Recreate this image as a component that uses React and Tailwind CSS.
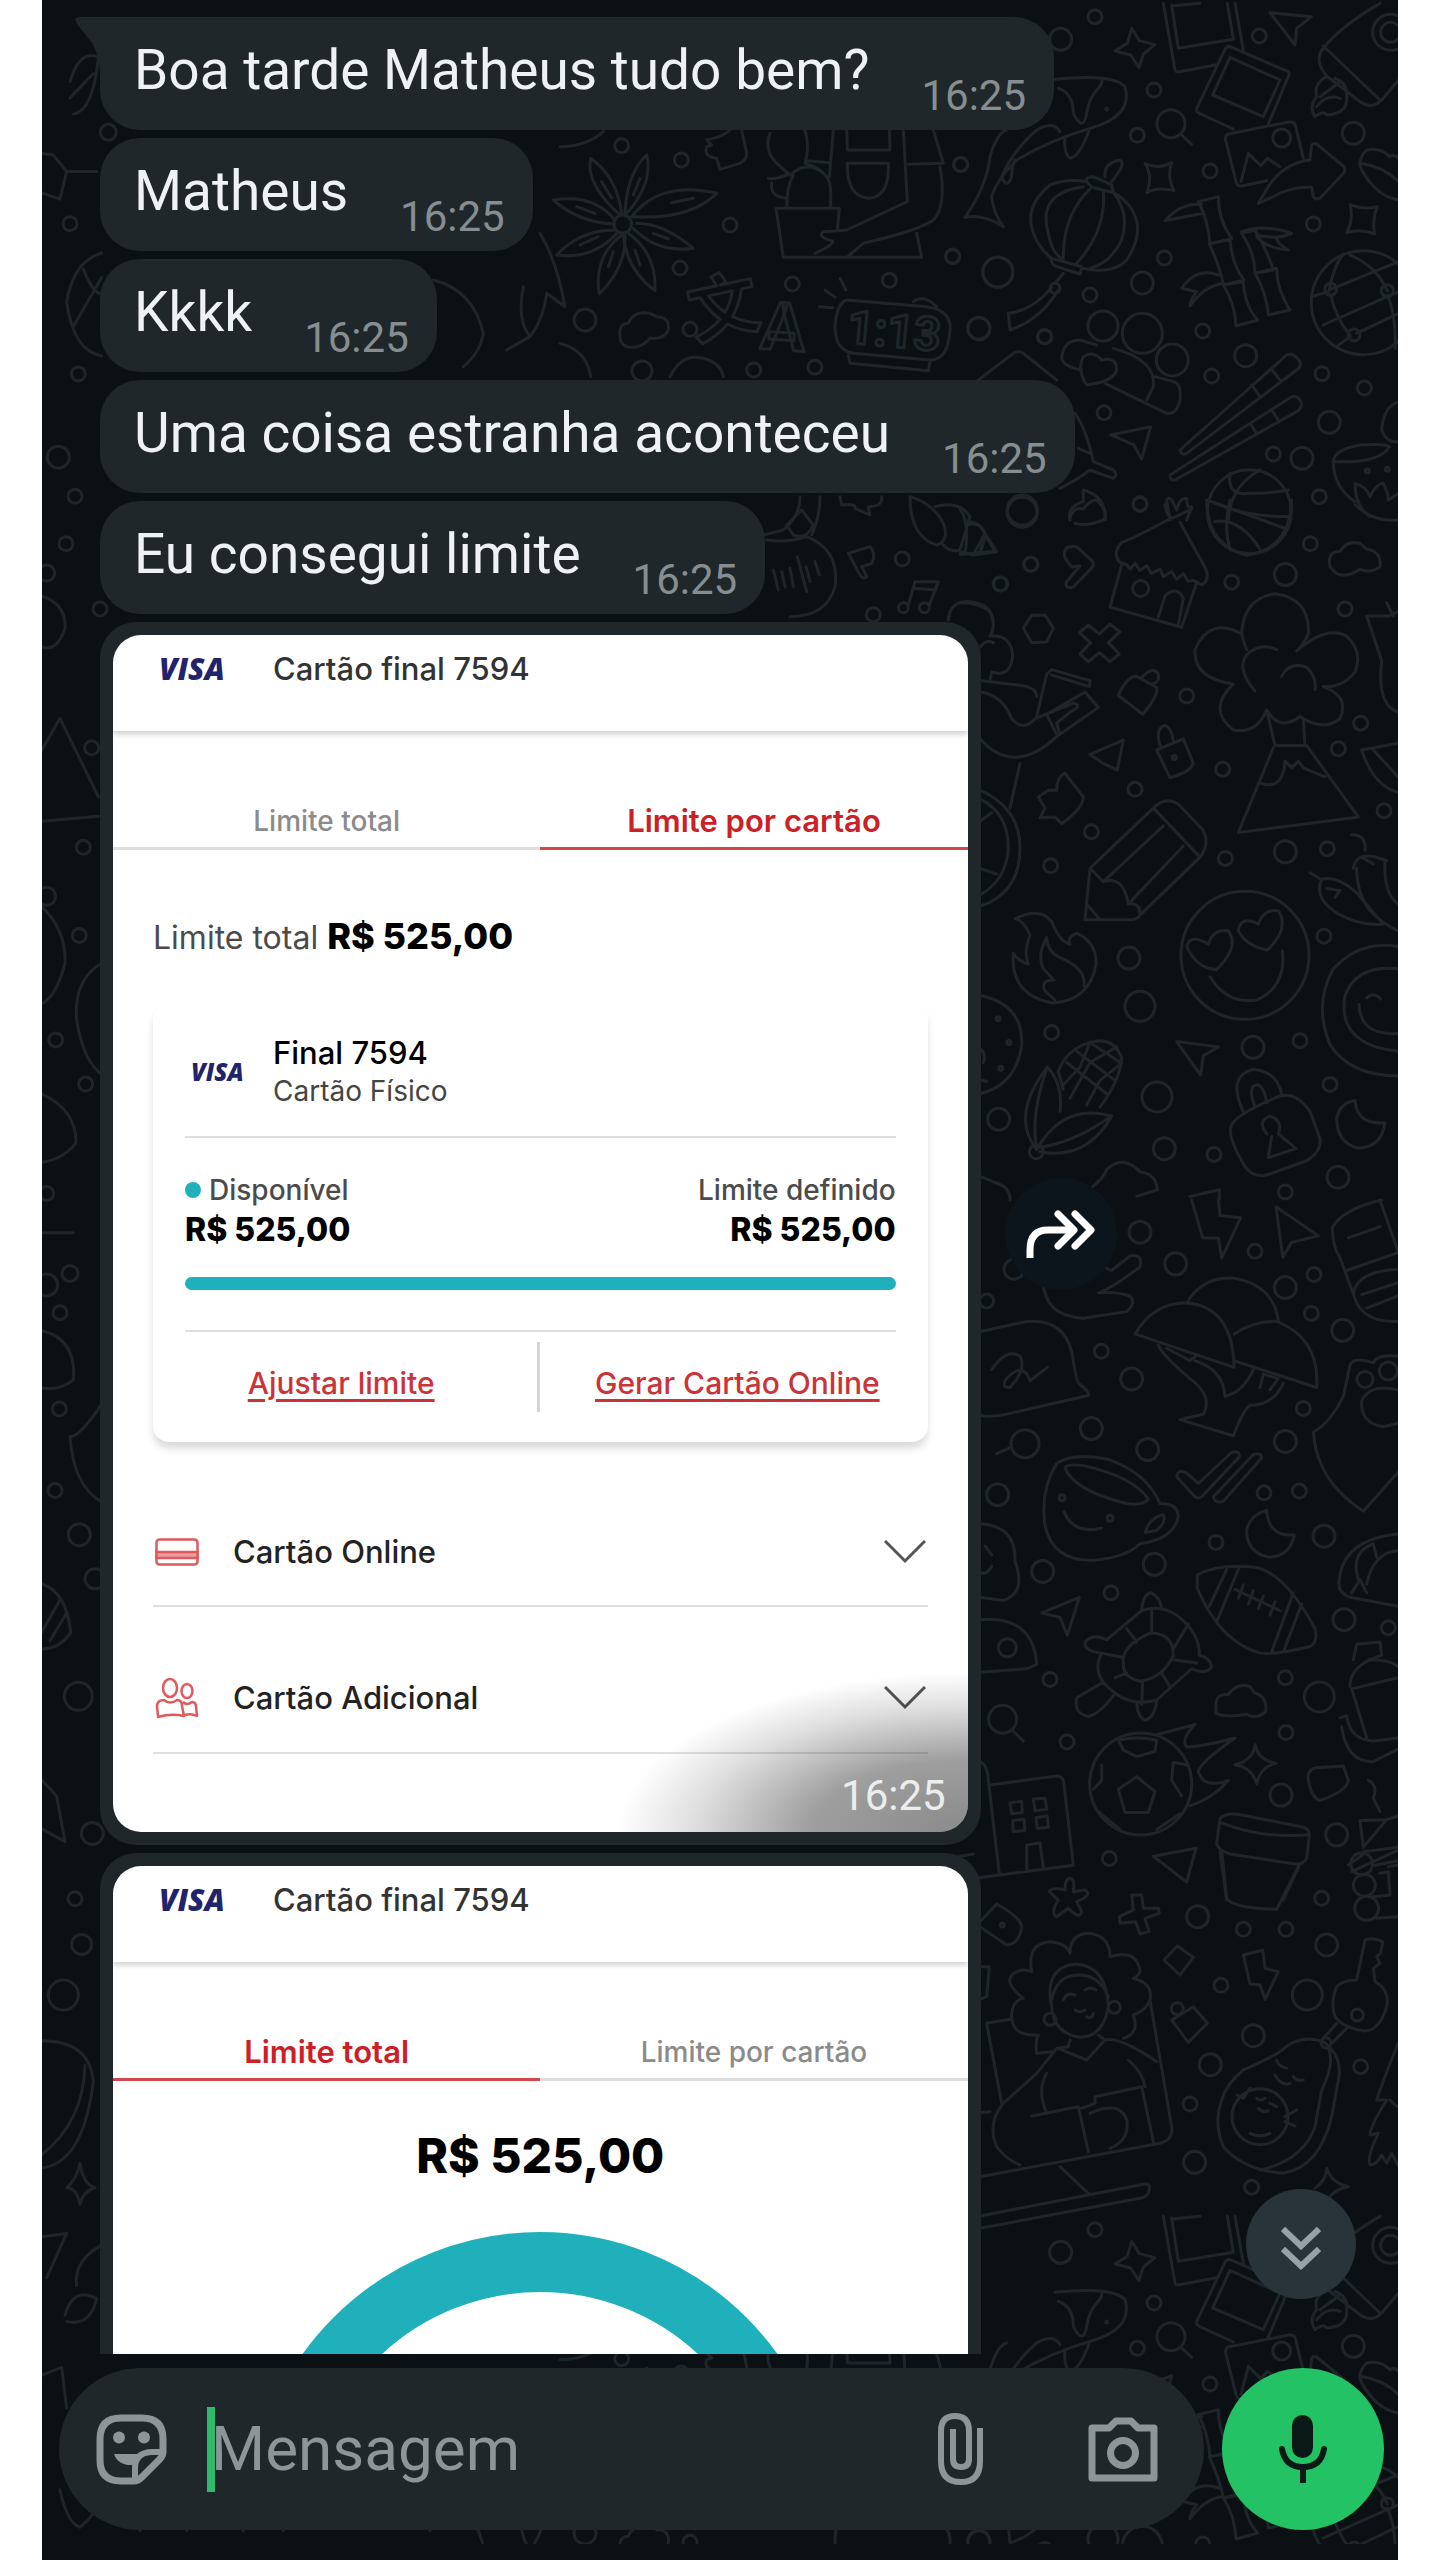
import { useState } from "react";
import clsx from "clsx";

const MESSAGES = [
  { id: 1, text: "Boa tarde Matheus tudo bem?", time: "16:25", tail: true },
  { id: 2, text: "Matheus", time: "16:25" },
  { id: 3, text: "Kkkk", time: "16:25" },
  { id: 4, text: "Uma coisa estranha aconteceu", time: "16:25" },
  { id: 5, text: "Eu consegui limite", time: "16:25" },
];

const TABS = ["Limite total", "Limite por cartão"];

// Wallpaper doodles. Each tile has its own origin and scale; a dot is [x, y, radius].
const TILES = [
  {
    id: "top-right",
    origin: "translate(940 0) scale(0.33333)",
    sx: 1 / 3,
    sy: 1 / 3,
    repeat: true,
    dots: [
      [465, 50, 7], [362, 118, 11], [642, 270, 7], [592, 406, 7], [958, 108, 7], [810, 513, 7], [1240, 400, 11],
      [1120, 672, 7], [62, 494, 7], [38, 770, 7], [173, 817, 15], [117, 986, 11], [315, 1010, 7], [450, 885, 7],
      [607, 849, 11], [673, 774, 7], [788, 993, 7], [917, 1067, 11], [815, 1128, 7], [1146, 1121, 7], [1273, 1164, 7],
      [1168, 1267, 11], [492, 1238, 7], [1000, 1362, 7], [1086, 1375, 11], [1138, 1490, 7], [600, 1511, 7], [247, 1530, 15],
      [489, 978, 15], [607, 1000, 20], [697, 1080, 16], [1025, 414, 9], [693, 371, 14], [1352, 97, 18], [1352, 97, 10],
      [1172, 868, 6], [1342, 872, 6], [1242, 1005, 6], [345, 865, 5], [500, 327, 1], [1282, 1413, 2], [1342, 1408, 2],
      [1270, 908, 52], [928, 1535, 42],
    ],
    paths: [
      "M575 85L598 122L645 134L610 162L597 203L572 165L525 153L562 130Z",
      "M670 10L705 210Q708 217 718 215L830 194M695 15L715 145L880 118L862 10M885 10L910 150M695 18L780 10",
      "M870 140L1045 215Q1050 222 1045 230L985 372M870 140Q860 138 855 148L770 325Q768 335 778 340L880 387M870 172L1020 240L970 350L818 285Z",
      "M865 402L1050 365Q1065 365 1067 380L1090 475M865 402Q855 405 857 420L888 545Q892 560 905 558L980 542M903 545L925 460L962 497L982 475L1020 500",
      "M955 610L985 560Q1030 490 1110 480L1115 435Q1120 428 1130 432L1212 500Q1216 510 1212 518L1140 595Q1125 600 1120 590L1115 562Q1050 560 1000 590Z",
      "M725 405L755 433",
      "M990 38L1115 50L1070 85L1065 135Z",
      "M1320 10Q1200 80 1150 145Q1120 180 1160 228L1260 305Q1295 330 1325 300L1376 240M1150 138L1320 300M1160 230Q1120 250 1130 290Q1105 320 1125 350Q1150 330 1160 345Q1225 340 1220 290Q1225 250 1185 235M1140 290L1195 250M1130 320Q1160 280 1200 295",
      "M615 490Q655 510 695 488Q680 530 702 572Q655 560 620 578Q640 530 615 490ZM1230 614Q1270 630 1312 620Q1295 660 1304 702Q1260 685 1220 698Q1242 655 1230 614Z",
      "M345 238Q520 220 555 260Q580 350 450 385Q330 420 230 480Q170 540 155 590Q160 640 190 680Q130 640 75 652Q140 560 150 470Q170 400 200 390M355 265Q400 280 400 340Q430 400 440 340Q445 300 470 270Q490 250 485 235M360 395Q340 360 290 390Q220 450 185 530Q200 570 215 530Q215 500 225 480M375 410Q370 460 390 475Q420 470 450 385",
      "M440 545Q380 535 330 555Q250 620 280 700Q300 750 335 775Q330 790 350 800L420 822L425 805Q520 825 560 780Q620 690 570 620Q545 590 520 578M440 545Q435 530 460 530L515 555L520 578L455 562ZM335 775L425 800M455 562Q370 640 370 770M490 572Q500 690 410 790M430 560Q290 580 325 700Q335 760 370 780M520 578Q570 640 545 720Q510 790 450 805M495 530Q490 490 540 480Q560 490 515 545M370 820L345 850M355 870Q300 960 210 990L205 940Q280 930 335 862",
      "M775 605L835 590Q835 660 875 715L810 732Q805 660 775 605M785 612Q720 610 675 662L790 640M808 732L870 718Q875 790 912 840L850 855Q840 800 808 732M850 855L910 845Q915 920 953 960L888 978Q885 910 850 855M905 700L945 690Q985 760 1000 810L945 820Q945 760 905 700M905 695Q970 670 1055 700Q1010 720 950 705M950 710Q980 745 1045 750Q1010 730 1010 715M945 820L1010 805Q1010 870 1050 930L985 945Q980 880 945 820M850 850Q790 860 750 918Q750 900 770 875L725 865Q770 800 835 825",
      "M1168 868Q1180 800 1210 762M1172 868L1376 785M1172 885Q1190 960 1230 1005M1150 975L1376 875M1250 1000L1376 940M1342 872Q1310 800 1230 765M1342 885Q1370 950 1365 1045M1115 890L1165 875M1190 1040L1230 1010",
      "M115 1140L220 1060Q235 1050 250 1060L350 1140M405 1240Q440 1290 460 1385L520 1410Q535 1425 520 1435L450 1410Q410 1440 360 1465M415 1345L450 1360",
      "M365 1075Q370 1020 420 1020L470 1035M365 1075Q370 1100 425 1110M440 1155Q410 1110 430 1070Q460 1050 485 1080Q530 1070 530 1110Q520 1145 440 1155ZM520 1045Q650 1080 640 1160L620 1200M495 1150L680 1240Q710 1245 720 1200Q725 1150 700 1145L645 1130",
      "M720 1350L1040 1065Q1060 1055 1080 1085Q1085 1100 1070 1110L740 1360Q725 1368 720 1350ZM935 1155L960 1190M995 1108L1020 1140M690 1425L1055 1190Q1075 1185 1085 1210Q1085 1225 1070 1235L705 1440Q690 1442 690 1425ZM930 1270L950 1300M995 1230L1015 1260",
      "M512 1305L632 1280L605 1378L582 1335Z",
      "M1180 1385Q1180 1350 1260 1335Q1340 1330 1348 1340Q1320 1390 1180 1385M1180 1385Q1180 1460 1245 1505M1376 1205Q1330 1220 1325 1290Q1340 1330 1376 1325M1245 1450Q1280 1460 1290 1490Q1310 1450 1330 1450Q1345 1480 1345 1500L1376 1480M1245 1450Q1245 1520 1290 1550",
      "M1376 475Q1360 460 1350 470Q1320 440 1280 450Q1250 480 1265 510Q1310 590 1376 600M1262 490Q1330 500 1376 545",
      "M805 1500Q900 1550 1045 1550M870 1420Q860 1490 930 1480Q1000 1480 1045 1470M960 1410Q870 1460 865 1560M680 1500Q690 1480 710 1530Q720 1490 740 1495Q740 1530 755 1520L740 1560M680 1500L690 1560M390 1560Q380 1520 430 1505L430 1470Q500 1490 495 1560",
    ],
  },
  {
    id: "top-middle",
    origin: "translate(560 120) scale(0.33333)",
    sx: 1 / 3,
    sy: 1 / 3,
    repeat: true,
    dots: [
      [185, 77, 7], [364, 120, 7], [510, 315, 7], [188, 312, 9], [360, 444, 7], [75, 600, 11], [390, 628, 7], [697, 492, 7],
      [988, 481, 7], [1178, 408, 7], [1314, 456, 15], [1256, 625, 11], [1453, 650, 7], [1202, 133, 7], [246, 753, 10],
      [581, 750, 7], [765, 742, 7], [1386, 1176, 15], [1027, 1317, 7], [1413, 1333, 7], [1320, 1392, 7], [940, 1484, 7],
      [1030, 1463, 5], [1093, 1463, 5],
    ],
    paths: [
      "M185 280Q170 170 92 115Q75 190 180 285M200 280Q280 190 260 105Q200 160 195 280M215 290Q300 180 470 220Q390 300 220 290M230 310Q310 310 400 385Q290 400 220 325M205 340Q290 400 285 512Q200 450 190 345M185 345Q100 410 118 522Q200 440 195 345M165 330Q60 330 -10 405Q100 420 175 335M165 300Q100 220 -20 240Q60 310 165 312",
      "M125 185L155 235M240 175L220 225M335 248L400 235M280 340L325 357M225 390L240 435M160 395L145 440M60 375L115 350M50 260L105 280",
      "M440 60Q490 50 510 30M545 30L560 100Q560 120 540 130L480 148L470 115Q430 110 440 80L455 75L440 60",
      "M630 40Q610 90 650 130L690 165M735 30Q750 80 735 130Q810 150 812 210L812 265M690 165Q740 120 790 160M680 265Q680 200 700 165M820 30L808 170M740 122L808 128M860 30L862 90L990 90L988 30M862 130L985 130Q990 230 925 235Q860 230 862 130ZM1030 30L1042 245L860 330L790 335Q770 350 815 362Q830 370 765 400M1120 30L1150 130L1045 133M1140 140Q1160 260 1120 300Q1080 330 910 370L860 412M648 265L838 265L832 330M648 265L670 412L1085 412L1070 340M680 165Q640 180 625 175M635 190Q630 230 680 235",
      "M180 650Q175 610 205 610Q220 570 270 580L290 590Q330 590 325 630Q310 660 270 655Q240 690 200 680Q180 670 180 650Z",
      "M860 540L1100 560Q1175 570 1170 630Q1165 720 1110 720L880 700Q825 690 825 620Q830 550 860 540ZM1060 545Q1090 520 1130 560M865 705L870 730L1105 752L1110 725M840 475L858 510M795 510L825 532M778 560L818 563",
      "M0 670Q80 690 92 770M330 770Q360 710 410 712Q480 720 490 770M0 80Q80 80 130 35",
      "M-380 480Q-260 510 -230 640Q-240 700 -290 740M-60 340Q-10 420 15 560L-40 520Q-50 600 -90 650Q-130 600 -110 500M-90 650L-160 690",
      "M720 1130Q720 1190 670 1230L610 1245M780 1130Q780 1190 755 1245M680 1215L725 1170L760 1215Q740 1260 700 1245ZM620 1260Q680 1270 740 1250Q840 1290 825 1400Q800 1490 690 1490",
      "M640 1350L655 1410M665 1355L675 1400M690 1345L700 1400M712 1310L740 1415M738 1340L750 1385M765 1325L778 1365",
      "M840 1130L845 1155Q890 1150 885 1165L930 1185L925 1160Q970 1160 965 1130",
      "M1050 1130Q1050 1250 1130 1275Q1170 1260 1150 1210Q1120 1150 1050 1130M1125 1160Q1200 1140 1230 1190L1200 1290Q1170 1300 1145 1270M1230 1205Q1265 1210 1275 1240L1240 1305L1200 1295M1275 1240L1310 1295L1240 1305M1275 1255L1260 1300",
      "M865 1300L930 1280Q950 1300 935 1330L905 1340L920 1370Q910 1380 900 1365Z",
      "M1045 1455L1065 1385L1135 1385L1108 1455M1062 1405L1128 1410",
      "M1165 1500Q1170 1440 1230 1445Q1290 1450 1300 1500",
    ],
    labels: [
      { x: 385, y: 640, size: 210, text: "文", rotate: "rotate(-12 480 560)" },
      { x: 605, y: 690, size: 200, text: "A", rotate: "rotate(4 670 600)" },
      { x: 862, y: 680, size: 140, text: "1:13", rotate: "rotate(5 990 630)" },
    ],
  },
  {
    id: "right",
    origin: "translate(960 500) scale(0.33333 0.44643)",
    sx: 1 / 3,
    sy: 0.44643,
    dots: [
      [187, 27, 15], [540, 10, 7], [212, 144, 7], [122, 188, 7], [1051, 98, 7], [976, 167, 11], [815, 184, 7], [1155, 244, 7],
      [680, 439, 7], [788, 603, 7], [525, 648, 7], [394, 743, 7], [272, 819, 7], [1202, 500, 7], [1135, 557, 7], [1272, 696, 7],
      [976, 788, 11], [1102, 781, 7], [796, 803, 7], [1092, 977, 7], [507, 1026, 11], [540, 1134, 15], [275, 1193, 7],
      [879, 1226, 11], [1020, 1211, 7], [591, 1337, 15], [116, 1387, 11], [613, 1453, 11], [762, 1466, 7], [1110, 1309, 7],
      [1134, 1517, 11], [976, 1550, 7], [542, 198, 8], [643, 577, 2], [855, 1020, 64], [114, 1162, 2], [147, 1215, 2], [122, 1273, 2],
      [229, 1460, 7],
    ],
    paths: [
      "M0 20Q30 50 15 120M25 55Q60 50 70 70L105 115L0 122M75 75L60 118M330 40Q340 15 370 20Q390 0 410 0Q450 30 430 45Q380 60 345 52",
      "M315 130Q305 100 350 105L395 135Q405 145 395 152L340 195Q315 200 318 185L360 148L335 150Z",
      "M630 42Q510 90 485 95Q455 120 480 140L500 145L510 155L525 142L540 158L560 147L575 165L600 155L610 172L635 160L650 178L670 165L685 182L700 180L725 190Q750 180 738 155L660 50M485 145L450 240L665 285L710 185M595 262L615 215Q650 190 670 220L655 280M615 10Q620 40 640 40L695 20",
      "M740 0Q740 100 860 124Q990 110 995 0M760 5L980 65M810 0Q790 60 810 112M765 48Q840 40 900 110",
      "M1110 150Q1100 115 1140 115Q1160 90 1200 97Q1220 110 1220 110Q1265 115 1260 150Q1230 165 1200 155Q1160 175 1130 165Z",
      "M190 287L215 258L255 258L280 287L260 318L215 320Z",
      "M385 280L418 300L450 278L480 295L445 320L478 345L450 362L418 342L385 362L360 345L392 320L358 297Z",
      "M845 300Q850 220 945 210Q1050 220 1045 300Q1030 325 1010 338Q1100 280 1160 305Q1210 340 1185 385Q1150 420 1090 418Q1170 440 1140 490Q1090 520 1020 485Q960 520 920 470Q890 525 820 515Q740 470 820 412Q700 400 705 335Q750 260 845 300ZM845 300Q850 320 860 335M885 428Q820 370 870 340Q910 320 950 335M965 395Q990 360 1040 375Q1070 395 1065 425M920 470L945 550L1035 550L1030 490",
      "M940 555L835 745L1195 710L1040 550M905 635Q970 650 975 585L995 600L1015 585L1030 600L1095 620",
      "M0 230Q60 230 90 250Q110 280 90 305Q155 300 158 350Q150 400 95 385L90 405M60 330Q80 310 100 320M65 405L180 415Q230 420 230 440M65 430Q130 440 155 490Q190 520 225 490L340 455Q370 460 330 475L290 500L300 525M230 485L260 390L275 380L390 405L388 418L275 392M60 535Q160 620 290 530L415 465L375 430L260 480L290 525M180 590L150 690",
      "M475 438Q500 395 530 395L590 420Q595 440 548 480ZM545 398Q580 370 595 390Q600 410 575 412",
      "M590 560L670 535L700 590Q690 610 630 622ZM600 550Q585 510 615 505Q635 510 640 540",
      "M390 570L490 538L472 605L430 590Z",
      "M235 665L265 650L290 650Q290 620 315 612L370 665Q370 690 305 725L285 710L240 712L255 690Z",
      "M375 940L390 825L580 690Q620 660 660 685L730 740Q750 770 720 800L540 930Q530 942 500 940ZM390 825L430 855L610 730M580 690L720 800M430 855Q490 840 505 905L670 775M505 905Q540 900 540 930M380 905L420 940",
      "M60 650Q180 690 180 780Q180 880 60 910M60 670Q145 700 145 780Q140 850 60 885M60 720L95 700M60 825L110 838",
      "M165 938Q240 910 275 945Q300 990 330 995Q320 980 350 970Q410 990 408 1040Q390 1120 280 1127Q150 1110 160 1015Q170 1030 205 1040Q190 1010 210 975Q190 940 165 938ZM260 980Q260 1010 300 1025Q380 1050 372 1088M260 980Q230 1020 250 1050L282 1075Q240 1075 255 1100L285 1120",
      "M680 1000Q690 970 745 995Q760 960 805 965Q840 1000 770 1052Q710 1050 680 1000ZM835 965Q840 930 895 950Q910 915 955 920Q990 960 922 1008Q860 1000 835 965ZM750 1068Q800 1130 890 1120Q980 1090 967 1010",
      "M1050 835L1085 850Q1130 840 1190 880L1270 950Q1200 955 1130 925Q1060 890 1085 850M1100 870L1140 875L1125 890M1175 750Q1220 750 1215 785M1180 825Q1190 780 1280 808M1190 825Q1190 880 1230 920Q1270 950 1314 965M1275 810Q1270 880 1314 905M1205 800L1240 815",
      "M1314 1000Q1200 985 1120 1050Q1060 1130 1110 1220Q1170 1290 1314 1290M1314 1050Q1190 1040 1155 1110Q1130 1220 1314 1235M1220 1115Q1240 1100 1262 1118M1197 1130Q1200 1200 1314 1195",
      "M60 1110Q190 1130 185 1220Q170 1310 60 1330M60 1230Q80 1240 70 1260M60 1300L80 1302",
      "M230 1455Q150 1380 262 1270Q310 1310 300 1370M230 1455Q210 1380 262 1270M230 1455Q310 1350 455 1380Q380 1480 240 1460M240 1450Q340 1440 455 1380M295 1280Q320 1230 390 1215Q460 1200 485 1250Q480 1300 420 1360M295 1280L310 1320M320 1260L440 1330M350 1235L465 1300M390 1215L485 1262M330 1340L390 1260L470 1225M310 1310L360 1270L390 1215M380 1355L420 1300L485 1262",
      "M650 1213L775 1225L730 1245L722 1288Z",
      "M1220 260L1285 260L1314 250M1220 260L1265 360Q1250 460 1314 475M1280 230L1300 260M1205 560L1314 545M1205 560Q1240 640 1314 655M1240 560L1314 620M1185 10Q1240 50 1314 45",
      "M850 1370Q800 1290 880 1275Q950 1280 965 1330M885 1360Q860 1310 895 1310Q915 1320 920 1350M815 1400Q830 1375 960 1335Q1010 1325 1050 1370L1080 1430Q1085 1460 1040 1480L920 1512Q870 1520 845 1480Q800 1420 815 1400ZM920 1420Q890 1390 930 1380Q970 1390 955 1420L1008 1453L925 1473L935 1425",
      "M1185 1345Q1190 1400 1275 1395Q1265 1450 1195 1452Q1130 1440 1130 1385Q1140 1350 1185 1345Z",
      "M395 1540Q430 1520 440 1500Q490 1465 540 1505Q590 1510 592 1545L530 1560M60 1515L110 1530Q150 1540 150 1568M690 1560L778 1545L778 1568",
    ],
  },
  {
    id: "right-lower",
    origin: "translate(960 1200) scale(0.33333 0.44643)",
    sx: 1 / 3,
    sy: 0.44643,
    dots: [
      [540, 72, 11], [647, 143, 11], [885, 115, 7], [1062, 167, 7], [976, 196, 11], [1054, 254, 7], [1148, 292, 11],
      [162, 155, 10], [80, 226, 7], [424, 339, 7], [515, 401, 11], [394, 512, 11], [563, 559, 11], [113, 660, 11], [1030, 467, 7],
      [976, 541, 11], [912, 656, 7], [1018, 652, 7], [1092, 753, 11], [768, 767, 7], [248, 832, 11], [583, 816, 11], [453, 880, 7],
      [1152, 940, 11], [1285, 958, 7], [976, 1070, 7], [270, 1074, 7], [1078, 1113, 15], [978, 1193, 7], [321, 1214, 7], [963, 1333, 11],
      [1130, 1422, 11], [448, 1475, 7], [195, 546, 14], [306, 667, 3], [450, 713, 3], [128, 1163, 14], [542, 1308, 51], [142, 1003, 9],
      [1215, 402, 8], [1285, 383, 9], [1205, 1487, 11], [1213, 1535, 11],
    ],
    paths: [
      "M60 295L200 272Q310 265 335 340Q350 410 355 410Q390 430 385 438L150 478Q100 488 60 482M95 380Q140 330 180 350Q200 380 150 420Q120 420 140 400Q190 360 210 405L262 375",
      "M695 0L728 85L775 85L785 130L842 40L780 35L775 0M948 15L1075 80L995 95L968 128Z",
      "M250 180Q250 260 370 265L500 250Q530 230 510 215Q470 205 415 208Q450 200 540 150Q550 120 510 125L455 158L430 150",
      "M525 300Q580 230 680 230Q820 240 822 375L525 300M680 230Q730 170 820 175Q940 190 955 270M822 300Q880 270 950 272Q1080 310 1070 420L822 360M595 325Q610 350 690 400Q760 440 730 480L660 492L820 528Q850 470 870 460Q940 460 970 410M705 360Q790 380 795 440Q850 430 880 380M620 332L690 360L710 348M900 420L910 390L955 400L930 425",
      "M110 568L150 555M290 590Q240 650 255 730Q280 810 400 807Q500 800 540 770Q640 760 655 710Q655 680 600 680Q560 610 440 580Q340 565 290 590ZM315 600Q320 590 370 595Q520 620 565 670Q550 685 500 680Q340 650 315 600ZM555 745Q570 710 610 705Q620 720 590 740ZM312 698Q340 750 425 735",
      "M650 620Q655 600 680 612L715 635L815 565Q840 560 838 575L725 665Q715 670 705 665ZM760 665L880 570Q905 565 905 578L790 675Q765 680 760 665Z",
      "M920 695Q925 755 1003 750Q990 800 925 800Q860 790 860 740Q870 705 920 695Z",
      "M1314 350Q1250 345 1240 365Q1180 350 1170 370L1150 440Q1110 500 1060 520Q1070 630 1210 697L1314 610M1314 425Q1230 410 1205 450Q1200 500 1270 508L1314 500",
      "M1265 0Q1150 20 1118 60Q1115 100 1140 130L1190 230Q1220 275 1314 272M1160 158L1314 118M1260 0L1314 115M1165 85L1260 60M1180 210Q1190 160 1314 155M1205 212L1314 185M1220 242L1314 215",
      "M712 840Q770 815 880 822Q970 830 1065 960Q1075 990 1050 1000Q940 1020 900 1015Q780 990 712 870ZM800 828L748 910M838 822L770 945M1000 880L935 1012M1025 905L970 1012M825 872L960 920M850 862L835 892M880 875L865 905M910 887L895 915M945 900L930 930",
      "M60 725Q170 730 165 810Q200 880 130 897L60 890M60 940Q220 930 230 1040L200 1050L60 1058M75 775L95 795M60 835Q85 840 95 820",
      "M245 925L358 890L322 975L300 935Z",
      "M545 920Q550 880 575 880Q600 890 605 915M545 920Q600 905 650 930Q720 970 718 1020Q750 1025 755 1045Q740 1065 695 1050L590 1120Q500 1140 430 1080Q400 1050 425 1015Q370 1010 375 990Q400 970 440 985ZM490 1040Q480 1000 570 970Q640 970 640 1020Q610 1070 540 1078Q490 1070 490 1040ZM575 915L575 968M500 960L530 990M425 1015L490 1025M640 1030L710 1037M640 1005L685 950M605 1060L630 1090M548 1078L545 1130M465 1070L500 1060M430 1080L350 1115Q340 1150 385 1157Q420 1150 460 1110M530 1130Q535 1160 555 1165Q585 1160 590 1120",
      "M768 1135Q765 1105 805 1108Q830 1080 870 1090L885 1105Q920 1110 918 1145Q890 1165 860 1152Q800 1160 768 1150Z",
      "M160 1190L190 1212",
      "M475 1210Q530 1200 590 1210L585 1235L530 1247L490 1232ZM475 1320L530 1292L585 1325L565 1372L495 1372ZM640 1260L680 1265M640 1260L635 1300L665 1335M425 1265L425 1300L400 1320M415 1370L480 1410M590 1410L660 1375M590 1198L705 1175Q660 1210 680 1225Q720 1225 825 1205Q720 1260 715 1280Q730 1320 805 1300Q760 1340 690 1357",
      "M885 1220Q895 1255 948 1262Q900 1270 890 1308Q875 1270 825 1265Q880 1255 885 1220Z",
      "M1045 1300Q1040 1275 1070 1272L1150 1268L1165 1300Q1160 1325 1080 1345Q1055 1340 1045 1300Z",
      "M95 1310L290 1290Q310 1290 312 1310L340 1490L40 1520M60 1260Q80 1260 85 1300L118 1510M150 1350L185 1347L187 1372L155 1375ZM220 1342L255 1340L260 1365L225 1368ZM158 1390L192 1387L195 1412L160 1415ZM228 1383L262 1380L265 1405L232 1408ZM200 1500L200 1445L240 1440L250 1495M0 1470L40 1465",
      "M580 1470L708 1452L680 1528Z",
      "M780 1385Q800 1370 850 1378L1030 1405Q1050 1410 1048 1425L1040 1475Q1030 1490 1000 1487L810 1465Q770 1455 770 1440ZM785 1395Q900 1430 1048 1422M780 1460L800 1568M1020 1487L970 1568",
      "M1138 850Q1150 760 1314 748M1138 850Q1130 880 1170 890L1314 910M1195 850Q1170 790 1240 770L1250 800M1175 880L1200 850L1220 880M1220 860Q1240 790 1314 785M1180 1030L1190 995L1260 990L1265 1020L1225 1030M1170 1090Q1170 1050 1230 1030Q1290 1030 1314 1045M1175 1095L1314 1070M1175 1095L1220 1205M1140 1160L1160 1155Q1170 1210 1240 1212L1314 1205M1145 1180Q1160 1260 1240 1258L1314 1230M1225 1300Q1255 1310 1240 1340L1260 1370",
      "M1200 1390L1280 1388L1210 1450ZM1210 1460L1314 1450M1245 1490L1314 1480M1280 1388L1314 1380",
    ],
  },
  {
    id: "bottom-right",
    origin: "translate(960 1840) scale(0.33333)",
    sx: 1 / 3,
    sy: 1 / 3,
    dots: [
      [713, 230, 11], [850, 268, 7], [978, 268, 7], [1085, 175, 7], [1100, 315, 11], [783, 436, 7], [1042, 465, 15], [880, 587, 11],
      [751, 674, 11], [1202, 680, 7], [690, 792, 7], [704, 967, 11], [875, 1042, 7], [127, 255, 2], [1220, 205, 12], [1192, 525, 6],
      [270, 538, 6], [463, 502, 6], [1098, 608, 5], [652, 506, 6], [900, 830, 28],
    ],
    paths: [
      "M60 245L110 192Q180 230 185 260Q180 310 140 315L60 260",
      "M315 150Q315 115 330 115Q345 115 340 155L375 150Q400 165 350 185L365 215Q360 240 325 205L290 230Q270 220 295 180L268 155Q275 140 315 150Z",
      "M515 165L545 165L550 205L595 205L598 220L555 235L567 275L540 282L527 245L480 250L478 230L520 210Z",
      "M785 30L800 175Q820 205 950 208L1020 70",
      "M612 360L652 318L700 352L660 405ZM635 540L700 500L742 550L685 607Z",
      "M850 345L908 330L915 385L955 395L915 478L900 435L870 432Z",
      "M1190 420L1215 300Q1240 290 1268 305L1262 340L1250 350L1260 370L1240 385L1245 425Q1290 450 1280 500Q1260 570 1215 573Q1150 565 1125 530Q1110 490 1130 440Q1150 420 1190 420M1130 550L1090 595M1165 560L1115 610",
      "M960 635Q1020 580 1090 605Q1150 650 1135 720L1115 830Q1080 980 970 1000Q850 990 790 920Q760 850 785 780Q800 730 850 690Q920 660 960 635ZM1105 625Q1125 670 1085 750L1065 860Q1030 960 900 990M1000 710Q1010 725 1030 720M950 660Q955 680 980 685M945 705Q965 740 990 730M870 880Q900 895 930 880M870 745L850 775L832 765M975 830L1010 810M975 845L1005 858M890 775Q900 785 915 775M895 805Q910 820 925 812M930 790L950 800",
      "M1314 610Q1270 720 1250 780L1280 780Q1230 860 1230 885L1255 880Q1220 950 1230 975Q1250 975 1265 945L1280 970L1295 940L1314 975M1290 780Q1310 800 1314 800",
      "M1065 1045Q1100 1020 1100 985Q1115 1030 1165 1040Q1130 1045 1110 1070",
      "M230 640Q225 600 235 585Q150 590 155 520Q160 480 190 475Q120 420 170 395Q190 385 215 395Q200 310 270 305Q320 310 330 340Q330 280 390 280Q450 290 450 350Q520 330 535 375Q550 400 520 415Q580 430 570 480Q560 510 520 525Q540 580 490 595M275 500Q250 380 350 372Q440 380 445 500Q430 590 360 592Q280 580 275 500ZM275 480Q290 400 365 405Q420 410 445 470M310 480Q320 455 345 465M375 450Q390 440 408 450M345 510Q360 520 375 510M380 530Q395 540 400 520",
      "M330 600L325 620L290 625L230 700L130 790M295 625L380 660L435 600L415 585M435 600Q480 590 590 665M130 790Q80 850 110 920Q140 960 180 975M260 700Q230 750 260 820M215 828L355 800L385 935M365 805L405 790L405 770L545 740L580 905M390 820Q480 780 500 840Q510 900 450 925M505 660Q550 700 555 740M570 480L635 860Q640 900 600 910L60 1010M80 550L125 790M80 550L150 538M60 380L88 380L80 470L60 478M60 818L90 815M300 980L385 1060M60 1128L555 1032Q575 1030 565 1060Q560 1070 540 1075L60 1165M230 640L275 635",
      "M1165 75L1215 40M1175 95L1314 30M1260 100L1285 95L1290 165L1240 170M1285 80L1314 75M1250 235L1314 230",
    ],
  },
  {
    id: "left",
    origin: "translate(30 0) scale(0.33333 1.63265)",
    sx: 1 / 3,
    sy: 1.63265,
    dots: [
      [120, 137, 7], [145, 229, 7], [85, 280, 11], [135, 304, 7], [108, 333, 7], [50, 351, 8], [210, 373, 7], [185, 458, 7],
      [50, 549, 9], [160, 519, 7], [148, 573, 7], [77, 637, 7], [167, 664, 7], [120, 780, 8], [50, 787, 11], [90, 804, 7],
      [88, 863, 7], [75, 913, 7], [148, 940, 11], [145, 1039, 14], [187, 1123, 11], [135, 1163, 7], [155, 1191, 10], [100, 1222, 15],
      [235, 81, 8], [50, 731, 7], [195, 967, 10],
    ],
    paths: [
      "M34 118L90 122L110 105L200 105M110 105L70 95L34 94",
      "M215 155Q130 160 110 185Q130 215 215 218M160 165Q190 180 215 180M130 200L215 170",
      "M34 365Q110 370 105 385Q80 400 34 396M34 460L90 440L205 488M34 503L205 500M34 555Q110 570 105 590Q80 610 34 615",
      "M215 590Q130 600 140 625Q160 650 215 658M34 670Q140 680 138 700Q100 710 34 712M34 755L130 755M34 815Q140 820 130 845Q90 852 34 850",
      "M215 860Q150 880 120 880Q130 910 215 920M34 970Q110 975 122 1000Q90 1010 34 1010M34 1000L90 980M60 1005L110 988M34 1120L105 1128L80 1100L34 1090",
      "M34 1250Q180 1250 190 1275Q160 1325 34 1328M34 1320Q160 1300 165 1265M110 1340Q140 1335 150 1325Q160 1338 195 1340Q160 1342 150 1350Q140 1340 110 1340Z",
      "M34 1370L110 1368L50 1395M215 1375Q130 1385 140 1400M105 1418Q130 1400 200 1408Q180 1425 110 1422",
      "M140 12L215 30M120 50Q150 30 205 35Q190 68 130 70M120 60L190 45",
      "M34 1455L95 1450L110 1475M90 1525Q110 1545 150 1548Q200 1540 230 1525M300 1530L330 1550M420 1530L470 1550M620 1530L640 1550M760 1550L800 1528M900 1530Q960 1560 1050 1530M1180 1528L1200 1550",
    ],
  },
];

function Tile({ origin, sx, sy, dots, paths, labels = [] }) {
  return (
    <g transform={origin}>
      {dots.map(([x, y, r], i) => (
        <ellipse key={i} cx={x} cy={y} rx={r / sx} ry={r / sy} vectorEffect="non-scaling-stroke" />
      ))}
      {paths.map((d, i) => (
        <path key={i} d={d} vectorEffect="non-scaling-stroke" />
      ))}
      {labels.map((l) => (
        <text
          key={l.text}
          x={l.x}
          y={l.y}
          fontSize={l.size}
          transform={l.rotate}
          vectorEffect="non-scaling-stroke"
          className="font-['Roboto','Noto_Sans_CJK_SC',sans-serif] font-bold"
        >
          {l.text}
        </text>
      ))}
    </g>
  );
}

function Wallpaper() {
  return (
    <div className="absolute inset-x-0 top-0 bottom-4 overflow-hidden" aria-hidden="true">
      <svg
        viewBox="42 0 1356 2544"
        preserveAspectRatio="xMidYMin slice"
        className="h-full w-full fill-none stroke-[#1e2629] stroke-[3px]"
        strokeLinecap="round"
        strokeLinejoin="round"
      >
        {TILES.map((tile) => (
          <Tile key={tile.id} {...tile} />
        ))}
        <g transform="translate(0 2213)">
          {TILES.filter((tile) => tile.repeat).map((tile) => (
            <Tile key={tile.id} {...tile} labels={[]} />
          ))}
        </g>
      </svg>
    </div>
  );
}

function Bubble({ text, time, tail }) {
  return (
    <div className="relative flex h-[113px] w-fit items-start gap-[52px] rounded-[40px] bg-[#1f272a] pt-6 pr-7 pl-[34px]">
      {tail && (
        <svg className="absolute top-0 -left-6" width="72" height="56" viewBox="0 0 72 56" fill="#1f272a">
          <path d="M4 0H72V56H24Q24 40 16 26L1 7Q-2 0 4 0Z" />
        </svg>
      )}
      <p className="relative text-[55px] leading-[58px] text-[#eef2f4]">{text}</p>
      <time className="mt-9 text-[42px] leading-[38px] text-[#868e91]">{time}</time>
    </div>
  );
}

function Visa({ small }) {
  return (
    <span
      className={clsx(
        "font-['Open_Sans',sans-serif] font-extrabold text-[#22246b] italic",
        small ? "w-[58px] text-[24px] leading-[32px]" : "w-[70px] text-[30px] leading-[40px]"
      )}
    >
      VISA
    </span>
  );
}

function Tabs({ active, onSelect }) {
  return (
    <div className="grid grid-cols-2" role="tablist">
      {TABS.map((tab) => (
        <button
          key={tab}
          type="button"
          role="tab"
          aria-selected={active === tab}
          onClick={() => onSelect(tab)}
          className={clsx(
            "border-b-[3px] pt-[70px] pb-[6px] leading-[40px]",
            active === tab
              ? "border-[#d3474b] text-[31px] font-semibold text-[#cc2026]"
              : "border-[#dedede] text-[28px] font-medium text-[#8b8b8b]"
          )}
        >
          {tab}
        </button>
      ))}
    </div>
  );
}

function ImageBubble({ initialTab, children }) {
  const [tab, setTab] = useState(initialTab);
  return (
    <div className="w-[calc(68%-2px)] shrink-0 rounded-[36px] bg-[#1f272a] p-[13px]">
      <div className="relative overflow-hidden rounded-[28px] bg-white font-['Inter',sans-serif]">
        <header className="flex h-24 items-start px-[46px] pt-[14px] shadow-[0_3px_6px_rgba(0,0,0,0.2)]">
          <Visa />
          <h2 className="ml-[44px] text-[31px] leading-[40px] font-medium text-[#333]">Cartão final 7594</h2>
        </header>
        <Tabs active={tab} onSelect={setTab} />
        {children}
      </div>
    </div>
  );
}

function CardOnlineIcon() {
  return (
    <svg width="44" height="28" viewBox="0 0 44 28" fill="none" stroke="#e0595c" strokeWidth="2.5">
      <rect x="1.5" y="1.5" width="41" height="25" rx="3" />
      <path d="M1.5 14H42.5V20H1.5Z" fill="#ee9c9e" />
    </svg>
  );
}

function CardExtraIcon() {
  return (
    <svg width="44" height="42" viewBox="0 0 44 42" fill="none" stroke="#e0595c" strokeWidth="2.5" strokeLinejoin="round">
      <ellipse cx="15" cy="11" rx="7" ry="9" />
      <ellipse cx="32" cy="14" rx="5.5" ry="7" />
      <path d="M9 23Q15 28 22 23Q27 23 27 29L29 39Q16 36 3 40L2 28Q3 23 9 23Z" />
      <path d="M28 25Q32 29 37 25Q41 25 41 30L42 39Q36 36 30 38" />
    </svg>
  );
}

function AccordionRow({ icon, label }) {
  return (
    <button type="button" className="flex w-full items-center border-b-2 border-[#e0e0e0] pt-[70px] pb-[33px] text-left">
      <span className="flex w-20 pl-[2px]">{icon}</span>
      <span className="text-[31px] leading-[40px] font-medium text-[#222]">{label}</span>
      <svg className="mr-[2px] ml-auto" width="42" height="24" viewBox="0 0 42 24" fill="none" stroke="#555" strokeWidth="3">
        <path d="M1 1L21 21L41 1" />
      </svg>
    </button>
  );
}

function LimitPerCard() {
  return (
    <div className="px-10">
      <p className="mt-[66px] text-[32px] leading-[40px] text-[#4b4b4b]">
        Limite total <strong className="text-[36px] font-extrabold text-black">R$ 525,00</strong>
      </p>
      <section className="mt-[46px] rounded-[16px] px-8 pt-[29px] pb-[30px] shadow-[0_7px_8px_-1px_rgba(0,0,0,0.16)]">
        <div className="flex items-center pl-[6px]">
          <Visa small />
          <div className="ml-[24px] leading-[39px]">
            <h3 className="text-[31px] font-medium text-black">Final 7594</h3>
            <p className="text-[28px] text-[#444]">Cartão Físico</p>
          </div>
        </div>
        <hr className="mt-[25px] border-t-2 border-[#dedede]" />
        <dl className="mt-[32px] flex justify-between text-[28px] leading-[40px] font-medium text-[#4b4b4b]">
          <div>
            <dt className="flex items-center gap-2">
              <span className="size-4 rounded-full bg-[#1fb0bc]" />
              Disponível
            </dt>
            <dd className="text-[32px] font-extrabold text-black">R$ 525,00</dd>
          </div>
          <div className="text-right">
            <dt>Limite definido</dt>
            <dd className="text-[32px] font-extrabold text-black">R$ 525,00</dd>
          </div>
        </dl>
        <div className="mt-[27px] h-[13px] rounded-full bg-[#1fb0bc]" />
        <hr className="mt-[40px] border-t-2 border-[#dedede]" />
        <div className="mt-[10px] grid h-[70px] grid-cols-2 text-[30px] font-medium text-[#cc3338]">
          <div className="flex items-center justify-center border-r-[3px] border-[#d5d5d5] pt-3 pr-10">
            <a href="#ajustar" className="underline underline-offset-[5px]">Ajustar limite</a>
          </div>
          <div className="flex items-center justify-end pt-3 pr-4">
            <a href="#gerar" className="underline underline-offset-[5px]">Gerar Cartão Online</a>
          </div>
        </div>
      </section>
      <div className="mt-[20px] mb-[78px]">
        <AccordionRow icon={<CardOnlineIcon />} label="Cartão Online" />
        <AccordionRow icon={<CardExtraIcon />} label="Cartão Adicional" />
      </div>
      <div className="pointer-events-none absolute right-0 bottom-0 h-[160px] w-[350px] bg-[radial-gradient(farthest-side_at_100%_100%,rgba(0,0,0,0.46)_0%,rgba(0,0,0,0.38)_45%,rgba(0,0,0,0.13)_78%,rgba(0,0,0,0)_100%)]" />
      <time className="absolute right-[22px] bottom-[14px] font-['Roboto',sans-serif] text-[42px] leading-[44px] text-[#eceeee]">16:25</time>
    </div>
  );
}

function TotalLimit() {
  return (
    <div className="flex flex-col items-center">
      <p className="mt-[49px] text-[48px] leading-[52px] font-extrabold text-black">R$ 525,00</p>
      <svg className="mt-[50px]" width="584" height="584" viewBox="0 0 584 584" fill="none" stroke="#1fb0bc" strokeWidth="60">
        <circle cx="292" cy="292" r="262" />
      </svg>
    </div>
  );
}

function Composer() {
  return (
    <form className="relative flex items-center gap-[18px] pt-[14px] pr-[14px] pb-[30px] pl-[17px]">
      <div className="flex h-[162px] min-w-0 flex-1 items-center rounded-full bg-[#1f272a] pr-[46px] pl-[37px] text-[#8d9598]">
        <button type="button" aria-label="Figurinhas">
          <svg width="71" height="71" viewBox="0 0 71 71" fill="none" stroke="currentColor" strokeWidth="7">
            <path d="M25 4H46Q67 4 67 25V38Q67 42 63 46L46 63Q42 67 38 67H25Q4 67 4 46V25Q4 4 25 4Z" strokeLinejoin="round" />
            <path d="M67 38H55Q39 39 39 54V67" strokeWidth="6" />
            <circle cx="23" cy="23.500" r="6" fill="currentColor" stroke="none" />
            <circle cx="48" cy="23.500" r="6" fill="currentColor" stroke="none" />
            <path d="M18 40H44Q39 44 38 51Q22 52 18 40Z" fill="currentColor" stroke="none" />
          </svg>
        </button>
        <span className="ml-[40px] h-[85px] w-2 bg-[#2fb96b]" />
        <input
          type="text"
          aria-label="Mensagem"
          placeholder="Mensagem"
          className="-ml-1 min-w-0 flex-1 text-[62px] leading-[80px] outline-none placeholder:text-[#8d9598]"
        />
        <button type="button" aria-label="Anexar">
          <svg width="46" height="72" viewBox="0 0 46 72" fill="none" stroke="currentColor" strokeWidth="6">
            <path d="M42 15V48Q42 69 23 69Q3 69 3 48V18Q3 3 17 3Q31 3 31 18V46Q31 54 23 54Q15 54 15 46V16" />
          </svg>
        </button>
        <button type="button" aria-label="Câmera" className="ml-[104px]">
          <svg width="70" height="65" viewBox="0 0 70 65" fill="none" stroke="currentColor" strokeWidth="7" strokeLinejoin="round">
            <path d="M4 11H21L28 4H43L50 11H66V61H4Z" />
            <circle cx="35" cy="36" r="12.500" />
          </svg>
        </button>
      </div>
      <button type="button" aria-label="Gravar áudio" className="flex size-[162px] items-center justify-center rounded-full bg-[#23c264]">
        <svg width="48" height="70" viewBox="0 0 48 70" fill="none" stroke="#0b1a16" strokeWidth="6" strokeLinecap="round">
          <rect x="13" y="1" width="21" height="43" rx="10.500" fill="#0b1a16" stroke="none" />
          <path d="M3 35Q6 53 24 53Q42 53 45 35" />
          <path d="M24 54V69" strokeLinecap="butt" />
        </svg>
      </button>
    </form>
  );
}

export default function App() {
  return (
    <div className="h-screen bg-white px-[42px] font-['Roboto',sans-serif]">
      <div className="relative flex h-full flex-col overflow-hidden bg-[#0b1014]">
        <Wallpaper />
        <main className="relative min-h-0 flex-1 overflow-hidden pt-[17px] pl-[58px]">
          <div className="flex flex-col gap-2">
            {MESSAGES.map((message) => (
              <Bubble key={message.id} {...message} />
            ))}
            <div className="flex items-center gap-6">
              <ImageBubble initialTab="Limite por cartão">
                <LimitPerCard />
              </ImageBubble>
              <button type="button" aria-label="Encaminhar" className="flex size-[112px] shrink-0 items-center justify-center rounded-full bg-[#0c151b]">
                <svg width="70" height="48" viewBox="0 0 70 48" fill="none" stroke="#fff" strokeWidth="7" strokeLinejoin="round">
                  <path d="M4 48V40Q4 20 22 20H46" />
                  <path d="M32 4L48 20L32 36" strokeLinecap="round" />
                  <path d="M49 4L65 20L49 36" strokeLinecap="round" />
                </svg>
              </button>
            </div>
            <ImageBubble initialTab="Limite total">
              <TotalLimit />
            </ImageBubble>
          </div>
          <button type="button" aria-label="Ir para o fim" className="absolute right-[42px] bottom-[55px] flex size-[110px] items-center justify-center rounded-full bg-[#28333a]">
            <svg className="mt-2" width="40" height="44" viewBox="0 0 40 44" fill="none" stroke="#98a1a6" strokeWidth="6">
              <path d="M2 3L20 20L38 3" />
              <path d="M2 23L20 40L38 23" />
            </svg>
          </button>
        </main>
        <Composer />
      </div>
    </div>
  );
}
